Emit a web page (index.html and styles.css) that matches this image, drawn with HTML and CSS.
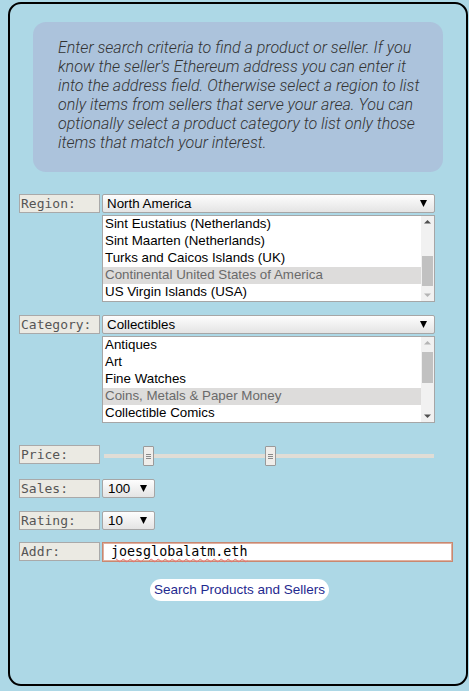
FILE: index.html
```html
<!DOCTYPE html>
<html>
<head>
<meta charset="utf-8">
<link rel="stylesheet" href="styles.css">
</head>
<body>
<div class="panel">
  <div class="info">Enter search criteria to find a product or seller. If you know the seller's Ethereum address you can enter it into the address field. Otherwise select a region to list only items from sellers that serve your area. You can optionally select a product category to list only those items that match your interest.</div>
  <div class="form">
    <div class="row r-region">
      <div class="label">Region:</div>
      <div class="select wide"><span>North America</span><svg class="arrow" width="7" height="7" viewBox="0 0 7 7"><path d="M0 0H7L3.5 7Z" fill="#000"/></svg></div>
    </div>
    <div class="listbox">
      <div class="opts">
        <div class="opt">Sint Eustatius (Netherlands)</div>
        <div class="opt">Sint Maarten (Netherlands)</div>
        <div class="opt">Turks and Caicos Islands (UK)</div>
        <div class="opt sel">Continental United States of America</div>
        <div class="opt">US Virgin Islands (USA)</div>
      </div>
      <div class="sbar">
        <svg class="sarrow" width="13" height="12" viewBox="0 0 13 12"><path d="M3 7.5H10L6.5 4Z" fill="#505050"/></svg>
        <div class="track"><div class="thumb t-region"></div></div>
        <svg class="sarrow" width="13" height="12" viewBox="0 0 13 12"><path d="M3 4.5H10L6.5 8Z" fill="#b4b4b4"/></svg>
      </div>
    </div>

    <div class="row r-cat">
      <div class="label">Category:</div>
      <div class="select wide"><span>Collectibles</span><svg class="arrow" width="7" height="7" viewBox="0 0 7 7"><path d="M0 0H7L3.5 7Z" fill="#000"/></svg></div>
    </div>
    <div class="listbox">
      <div class="opts">
        <div class="opt">Antiques</div>
        <div class="opt">Art</div>
        <div class="opt">Fine Watches</div>
        <div class="opt sel">Coins, Metals &amp; Paper Money</div>
        <div class="opt">Collectible Comics</div>
      </div>
      <div class="sbar">
        <svg class="sarrow" width="13" height="12" viewBox="0 0 13 12"><path d="M3 7.5H10L6.5 4Z" fill="#b4b4b4"/></svg>
        <div class="track"><div class="thumb t-cat"></div></div>
        <svg class="sarrow" width="13" height="12" viewBox="0 0 13 12"><path d="M3 4.5H10L6.5 8Z" fill="#505050"/></svg>
      </div>
    </div>

    <div class="row r-price">
      <div class="label">Price:</div>
      <div class="slider">
        <div class="rail"></div>
        <div class="knob k1"><i></i><i></i><i></i></div>
        <div class="knob k2"><i></i><i></i><i></i></div>
      </div>
    </div>

    <div class="row r-sales">
      <div class="label">Sales:</div>
      <div class="select small"><span>100</span><svg class="arrow" width="7" height="7" viewBox="0 0 7 7"><path d="M0 0H7L3.5 7Z" fill="#000"/></svg></div>
    </div>

    <div class="row r-rating">
      <div class="label">Rating:</div>
      <div class="select small"><span>10</span><svg class="arrow" width="7" height="7" viewBox="0 0 7 7"><path d="M0 0H7L3.5 7Z" fill="#000"/></svg></div>
    </div>

    <div class="row r-addr">
      <div class="label">Addr:</div>
      <div class="input"><span class="spell">joesglobalatm.eth</span></div>
    </div>

    <div class="btnrow">
      <div class="button">Search Products and Sellers</div>
    </div>
  </div>
</div>
</body>
</html>
```
FILE: styles.css
```css
html, body {
  margin: 0;
  padding: 0;
  background: #add8e6;
}
body {
  width: 469px;
  height: 691px;
  overflow: hidden;
}
.panel {
  box-sizing: border-box;
  margin: 2px 0 0 8px;
  width: 460px;
  height: 684px;
  border: 2px solid #000;
  border-radius: 13px;
  padding-top: 18px;
}
.info {
  box-sizing: border-box;
  margin-left: 23px;
  width: 410px;
  height: 150px;
  background: #acc3dc;
  border-radius: 13px;
  padding: 16px 20px 0 25px;
  font-family: Roboto, "Liberation Sans", sans-serif;
  font-weight: 300;
  font-style: italic;
  font-size: 16px;
  line-height: 19px;
  color: #333;
}
.form {
  padding-left: 9px;
  margin-top: 22px;
}
.row {
  display: flex;
  align-items: flex-start;
  gap: 2px;
}
.label {
  box-sizing: border-box;
  width: 81px;
  height: 19px;
  background: #ebeae3;
  border: 1px solid #a9a9a9;
  font-family: "DejaVu Sans Mono", monospace;
  font-size: 13px;
  line-height: 17px;
  color: #555;
  padding-left: 1px;
}
.select {
  box-sizing: border-box;
  height: 19px;
  border: 1px solid #a6a6a6;
  border-radius: 2px;
  background: linear-gradient(#fdfdfd, #e4e4e4);
  display: flex;
  align-items: center;
  justify-content: space-between;
  padding: 0 7px 0 4px;
  font-family: "Liberation Sans", Arial, sans-serif;
  font-size: 13.33px;
  color: #000;
}
.select.wide { width: 333px; }
.select.small { width: 53px; padding-left: 5px; }
.arrow { display: block; }
.listbox {
  box-sizing: border-box;
  margin: 2px 0 0 83px;
  width: 333px;
  height: 87px;
  border: 1px solid #a6a6a6;
  background: #fff;
  display: flex;
}
.opts {
  flex: 1;
  font-family: "Liberation Sans", Arial, sans-serif;
  font-size: 13.33px;
  color: #000;
}
.opt {
  height: 17px;
  line-height: 16px;
  padding-left: 2px;
  white-space: nowrap;
}
.opt.sel {
  background: #dddcdb;
  color: #6a6a6a;
}
.sbar {
  width: 13px;
  background: #f1f1f1;
  display: flex;
  flex-direction: column;
}
.sarrow { display: block; flex: none; }
.track {
  flex: 1;
  position: relative;
}
.thumb {
  position: absolute;
  left: 1px;
  width: 11px;
  background: #c1c1c1;
}
.t-region { top: 28px; height: 30px; }
.t-cat { top: 3px; height: 31px; }

.r-cat { margin-top: 13px; }
.r-price { margin-top: 22px; }
.r-sales { margin-top: 14px; }
.r-rating { margin-top: 13px; }
.r-addr { margin-top: 12px; }

.slider {
  position: relative;
  width: 333px;
  height: 20px;
}
.rail {
  position: absolute;
  left: 2px;
  right: 1px;
  top: 9px;
  height: 4px;
  background: #e0ddd6;
}
.knob {
  position: absolute;
  top: 1px;
  box-sizing: border-box;
  width: 11px;
  height: 20px;
  background: #efedea;
  border: 1px solid #9a9a9a;
  border-radius: 1px;
  display: flex;
  flex-direction: column;
  align-items: center;
  justify-content: center;
  gap: 1px;
}
.knob i {
  display: block;
  width: 5px;
  height: 1px;
  background: #8a8a8a;
}
.k1 { left: 41px; }
.k2 { left: 163px; }

.input {
  box-sizing: border-box;
  width: 351px;
  height: 20px;
  border: 1px solid #c98870;
  box-shadow: inset 0 0 0 1px #e0b0a0;
  background: #fff;
  padding-left: 8px;
  font-family: "DejaVu Sans Mono", monospace;
  font-size: 13.33px;
  line-height: 18px;
  color: #000;
}
.spell {
  text-decoration: underline wavy #e87070;
  text-decoration-thickness: 1px;
  text-underline-offset: 2px;
}
.btnrow {
  margin-top: 17px;
  padding-left: 131px;
}
.button {
  display: inline-block;
  height: 22px;
  line-height: 22px;
  padding: 0 4px;
  background: #fff;
  border-radius: 11px;
  font-family: "Liberation Sans", Arial, sans-serif;
  font-size: 13.5px;
  color: #1f2a8f;
}
```
